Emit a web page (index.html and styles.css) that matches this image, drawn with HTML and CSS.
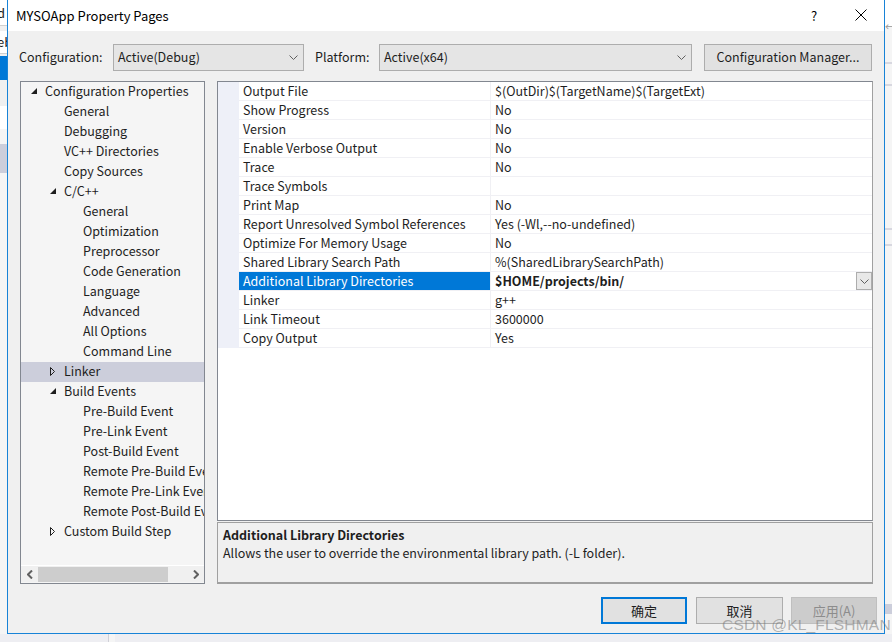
FILE: index.html
```html
<!DOCTYPE html>
<html>
<head>
<meta charset="utf-8">
<title>MYSOApp Property Pages</title>
<link rel="stylesheet" href="styles.css">
</head>
<body>
<div class="desktop">
  <div class="back-left">
    <div class="bl-row bl-white"><span>d</span></div>
    <div class="bl-gap"></div>
    <div class="bl-row bl-white2"><span>eb</span></div>
    <div class="bl-gap2"></div>
    <div class="bl-blue"></div>
    <div class="bl-light"></div>
    <div class="bl-white3"></div>
    <div class="bl-light2"></div>
    <div class="bl-sel"></div>
  </div>
  <div class="back-right">
    <div class="br-top"><span class="br-arrow">&#8592;</span></div>
    <div class="br-line br-l1"></div>
    <div class="br-line br-l2"></div>
    <div class="br-line br-l3"></div>
    <div class="br-line br-l4"></div>
    <div class="br-band"></div>
  </div>
  <div class="back-bottom">
    <div class="bb-split"></div>
  </div>

  <div class="dialog">
    <div class="titlebar">
      <span class="title">MYSOApp Property Pages</span>
      <span class="help">?</span>
      <span class="close">
        <svg width="12" height="12" viewBox="0 0 12 12"><path d="M0.5 0.5 L11.5 11.5 M11.5 0.5 L0.5 11.5" stroke="#000" stroke-width="1" fill="none"/></svg>
      </span>
    </div>
    <div class="content">
      <div class="toprow">
        <span class="lbl lbl-config">Configuration:</span>
        <div class="select sel-config">
          <span class="sel-text">Active(Debug)</span>
          <svg class="chev" width="9" height="5" viewBox="0 0 9 5"><path d="M0.5 0.5 L4.5 4.5 L8.5 0.5" stroke="#606060" stroke-width="1" fill="none"/></svg>
        </div>
        <span class="lbl lbl-platform">Platform:</span>
        <div class="select sel-platform">
          <span class="sel-text">Active(x64)</span>
          <svg class="chev" width="9" height="5" viewBox="0 0 9 5"><path d="M0.5 0.5 L4.5 4.5 L8.5 0.5" stroke="#606060" stroke-width="1" fill="none"/></svg>
        </div>
        <div class="btn cfgmgr">Configuration Manager...</div>
      </div>

      <div class="main">
        <div class="tree">
          <div class="tree-list">
            <div class="node l0"><span class="tw"><svg width="6" height="6" viewBox="0 0 6 6"><path d="M6 0 L6 6 L0 6 Z" fill="#1e1e1e"/></svg></span>Configuration Properties</div>
            <div class="node l1"><span class="tw"></span>General</div>
            <div class="node l1"><span class="tw"></span>Debugging</div>
            <div class="node l1"><span class="tw"></span>VC++ Directories</div>
            <div class="node l1"><span class="tw"></span>Copy Sources</div>
            <div class="node l1"><span class="tw"><svg width="6" height="6" viewBox="0 0 6 6"><path d="M6 0 L6 6 L0 6 Z" fill="#1e1e1e"/></svg></span>C/C++</div>
            <div class="node l2"><span class="tw"></span>General</div>
            <div class="node l2"><span class="tw"></span>Optimization</div>
            <div class="node l2"><span class="tw"></span>Preprocessor</div>
            <div class="node l2"><span class="tw"></span>Code Generation</div>
            <div class="node l2"><span class="tw"></span>Language</div>
            <div class="node l2"><span class="tw"></span>Advanced</div>
            <div class="node l2"><span class="tw"></span>All Options</div>
            <div class="node l2"><span class="tw"></span>Command Line</div>
            <div class="node l1 selected"><span class="tw"><svg width="5" height="9" viewBox="0 0 5 9"><path d="M0.5 0.5 L4.5 4.5 L0.5 8.5 Z" stroke="#1e1e1e" stroke-width="1" fill="none"/></svg></span>Linker</div>
            <div class="node l1"><span class="tw"><svg width="6" height="6" viewBox="0 0 6 6"><path d="M6 0 L6 6 L0 6 Z" fill="#1e1e1e"/></svg></span>Build Events</div>
            <div class="node l2"><span class="tw"></span>Pre-Build Event</div>
            <div class="node l2"><span class="tw"></span>Pre-Link Event</div>
            <div class="node l2"><span class="tw"></span>Post-Build Event</div>
            <div class="node l2"><span class="tw"></span>Remote Pre-Build Event</div>
            <div class="node l2"><span class="tw"></span>Remote Pre-Link Event</div>
            <div class="node l2"><span class="tw"></span>Remote Post-Build Event</div>
            <div class="node l1"><span class="tw"><svg width="5" height="9" viewBox="0 0 5 9"><path d="M0.5 0.5 L4.5 4.5 L0.5 8.5 Z" stroke="#1e1e1e" stroke-width="1" fill="none"/></svg></span>Custom Build Step</div>
          </div>
          <div class="hscroll">
            <span class="harrow"><svg width="6" height="9" viewBox="0 0 6 9"><path d="M5 0.5 L1 4.5 L5 8.5" stroke="#606060" stroke-width="2" fill="none"/></svg></span>
            <div class="htrack"><div class="hthumb"></div></div>
            <span class="harrow"><svg width="6" height="9" viewBox="0 0 6 9"><path d="M1 0.5 L5 4.5 L1 8.5" stroke="#606060" stroke-width="2" fill="none"/></svg></span>
          </div>
        </div>

        <div class="rightcol">
          <div class="grid">
            <div class="prow"><span class="strip"></span><span class="pname">Output File</span><span class="pval">$(OutDir)$(TargetName)$(TargetExt)</span></div>
            <div class="prow"><span class="strip"></span><span class="pname">Show Progress</span><span class="pval">No</span></div>
            <div class="prow"><span class="strip"></span><span class="pname">Version</span><span class="pval">No</span></div>
            <div class="prow"><span class="strip"></span><span class="pname">Enable Verbose Output</span><span class="pval">No</span></div>
            <div class="prow"><span class="strip"></span><span class="pname">Trace</span><span class="pval">No</span></div>
            <div class="prow"><span class="strip"></span><span class="pname">Trace Symbols</span><span class="pval"></span></div>
            <div class="prow"><span class="strip"></span><span class="pname">Print Map</span><span class="pval">No</span></div>
            <div class="prow"><span class="strip"></span><span class="pname">Report Unresolved Symbol References</span><span class="pval">Yes (-Wl,--no-undefined)</span></div>
            <div class="prow"><span class="strip"></span><span class="pname">Optimize For Memory Usage</span><span class="pval">No</span></div>
            <div class="prow"><span class="strip"></span><span class="pname">Shared Library Search Path</span><span class="pval">%(SharedLibrarySearchPath)</span></div>
            <div class="prow active"><span class="strip"></span><span class="pname">Additional Library Directories</span><span class="pval"><b>$HOME/projects/bin/</b><span class="ddbtn"><svg width="9" height="5" viewBox="0 0 9 5"><path d="M0.5 0.5 L4.5 4.5 L8.5 0.5" stroke="#606060" stroke-width="1" fill="none"/></svg></span></span></div>
            <div class="prow"><span class="strip"></span><span class="pname">Linker</span><span class="pval">g++</span></div>
            <div class="prow"><span class="strip"></span><span class="pname">Link Timeout</span><span class="pval">3600000</span></div>
            <div class="prow"><span class="strip"></span><span class="pname">Copy Output</span><span class="pval">Yes</span></div>
          </div>
          <div class="desc">
            <div class="desc-title">Additional Library Directories</div>
            <div class="desc-text">Allows the user to override the environmental library path. (-L folder).</div>
          </div>
        </div>
      </div>

      <div class="buttons">
        <div class="btn dlgbtn default">确定</div>
        <div class="btn dlgbtn cancel">取消</div>
        <div class="btn dlgbtn disabled">应用(A)</div>
      </div>
    </div>
  </div>
  <div class="watermark">CSDN @KL_FLSHMAN</div>
</div>
</body>
</html>
```

FILE: styles.css
```css
* { box-sizing: border-box; }
html, body { margin: 0; padding: 0; }
body {
  width: 892px;
  height: 642px;
  overflow: hidden;
  background: #f5f5f5;
  font-family: "Noto Sans CJK SC", "Noto Sans", sans-serif;
  font-size: 12px;
  color: #1e1e1e;
}
.desktop { position: relative; width: 892px; height: 642px; overflow: hidden; }

/* background window fragments */
.back-left { position: absolute; left: 0; top: 0; width: 7px; height: 634px; display: flex; flex-direction: column; background: #f5f5f5; overflow: hidden; }
.bl-row { height: 25px; background: #fff; font-size: 13px; line-height: 25px; white-space: nowrap; }
.bl-row span { margin-left: -3px; }
.bl-gap { height: 6px; background: #f0f0f0; border-top: 1px solid #d0d0d0; }
.bl-white2 { height: 22px; line-height: 22px; }
.bl-gap2 { height: 3px; background: #f0f0f0; border-top: 1px solid #d0d0d0; }
.bl-blue { height: 24px; background: #0078d7; }
.bl-light { height: 26px; background: #f0f0f0; }
.bl-white3 { height: 23px; background: #fff; }
.bl-light2 { height: 15px; background: #f5f5f5; }
.bl-sel { height: 29px; background: #cccedb; }

.back-right { position: absolute; left: 885px; top: 0; width: 7px; height: 642px; background: #f5f5f5; }
.br-top { height: 26px; background: #fff; position: relative; }
.br-arrow { position: absolute; left: 0; top: 22px; font-size: 10px; color: #999; line-height: 10px; }
.br-line { position: absolute; left: 0; width: 7px; height: 2px; background: #d8d8e0; }
.br-l1 { top: 62px; }
.br-l2 { top: 84px; }
.br-l3 { top: 228px; }
.br-l4 { top: 244px; }
.br-band { position: absolute; left: 0; top: 604px; width: 7px; height: 10px; background: #cccedb; }

.back-bottom { position: absolute; left: 0; top: 634px; width: 892px; height: 8px; background: #eeeef2; }
.bb-split { position: absolute; left: 108px; top: 0; width: 7px; height: 8px; background: #f5f5f5; border-left: 1px solid #d0d0d8; }

/* dialog */
.dialog {
  position: absolute;
  left: 7px;
  top: 0;
  width: 878px;
  height: 634px;
  border: 1px solid #1883d7;
  border-top: none;
  background: #f0f0f0;
  display: flex;
  flex-direction: column;
}
.titlebar {
  height: 31px;
  background: #fff;
  display: flex;
  align-items: center;
  padding-left: 8px;
  padding-bottom: 1px;
  flex-shrink: 0;
}
.title { font-size: 13px; color: #000; flex: 1; }
.help { font-size: 13px; color: #000; width: 12px; margin-right: 32px; }
.close { width: 12px; height: 12px; margin-right: 17px; display: flex; }

.content { flex: 1; display: flex; flex-direction: column; }

.toprow {
  margin-top: 13px;
  height: 27px;
  display: flex;
  align-items: center;
}
.lbl { font-size: 12.5px; color: #1e1e1e; padding-bottom: 2px; }
.lbl-config { margin-left: 11px; width: 94px; }
.lbl-platform { margin-left: 11px; width: 64px; }
.select {
  height: 27px;
  background: #e5e5e5;
  border: 1px solid #adadad;
  display: flex;
  align-items: center;
  padding-left: 4px;
  padding-right: 5px;
}
.sel-text { flex: 1; font-size: 12.5px; padding-bottom: 2px; }
.chev { display: block; }
.sel-config { width: 191px; }
.sel-platform { width: 313px; }
.btn {
  background: #e1e1e1;
  border: 1px solid #adadad;
  display: flex;
  align-items: center;
  justify-content: center;
  font-size: 12.5px;
  color: #1e1e1e;
  padding-bottom: 1px;
}
.cfgmgr { margin-left: 12px; width: 168px; height: 27px; padding-bottom: 2px; }

.main {
  margin-top: 10px;
  display: flex;
  padding-left: 12px;
}
.tree {
  width: 185px;
  height: 503px;
  border: 1px solid #828790;
  background: #f5f5f5;
  display: flex;
  flex-direction: column;
  overflow: hidden;
}
.tree-list { flex: 1; overflow: hidden; }
.node {
  height: 20px;
  line-height: 18px;
  padding-bottom: 2px;
  white-space: nowrap;
  font-size: 12.5px;
  display: flex;
  align-items: center;
  overflow: hidden;
}
.node .tw { width: 14px; height: 18px; display: flex; align-items: center; justify-content: flex-start; flex-shrink: 0; }
.node.l0 { padding-left: 10px; }
.node.l1 { padding-left: 29px; }
.node.l2 { padding-left: 48px; }
.node.selected { background: #cccedb; }

.hscroll {
  height: 17px;
  margin-bottom: 1px;
  border-top: 1px solid #fff;
  background: #f0f0f0;
  display: flex;
  align-items: center;
}
.harrow { width: 17px; height: 16px; display: flex; align-items: center; justify-content: center; }
.htrack { flex: 1; height: 16px; display: flex; align-items: center; }
.hthumb { width: 130px; height: 15px; background: #cdcdcd; }

.rightcol { margin-left: 12px; width: 656px; display: flex; flex-direction: column; }
.grid {
  height: 440px;
  border: 1px solid #828790;
  border-right-color: #a0a0a0;
  background: #fff;
}
.prow {
  height: 19px;
  display: flex;
  font-size: 12.5px;
}
.strip { width: 21px; background: #eef0f8; flex-shrink: 0; }
.pname {
  width: 252px;
  flex-shrink: 0;
  padding-left: 4px;
  line-height: 18px;
  border-bottom: 1px solid #f0f0f4;
  border-right: 1px solid #f0f0f4;
  white-space: nowrap;
  overflow: hidden;
}
.pval {
  flex: 1;
  padding-left: 4px;
  line-height: 18px;
  border-bottom: 1px solid #f0f0f4;
  white-space: nowrap;
  display: flex;
  align-items: flex-start;
}
.pval b { flex: 1; font-weight: 700; }
.prow.active .pname { background: #0078d7; color: #fff; }
.ddbtn {
  width: 16px;
  height: 18px;
  background: #e8e8e8;
  border: 1px solid #adadad;
  display: flex;
  align-items: center;
  justify-content: center;
}

.desc {
  margin-top: 1px;
  height: 62px;
  border: 1px solid #a0a0a0;
  border-bottom-width: 2px;
  background: #f0f0f0;
  padding: 3px 0 0 5px;
}
.desc-title { font-weight: 700; font-size: 12.5px; line-height: 18px; }
.desc-text { font-size: 12.5px; line-height: 18px; }

.buttons {
  margin-top: 13px;
  display: flex;
  justify-content: flex-end;
  padding-right: 7px;
}
.dlgbtn { width: 86px; height: 27px; font-size: 13px; }
.dlgbtn.default { border: 2px solid #0078d7; }
.dlgbtn.cancel { margin-left: 9px; width: 87px; }
.dlgbtn.disabled { margin-left: 8px; background: #cccccc; border-color: #bfbfbf; color: #8c8c8c; }

.watermark {
  position: absolute;
  left: 722px;
  top: 616px;
  font-family: "Liberation Sans", Arial, sans-serif;
  font-size: 15.5px;
  letter-spacing: 0.2px;
  color: rgba(120, 120, 120, 0.55);
  white-space: nowrap;
}
```
